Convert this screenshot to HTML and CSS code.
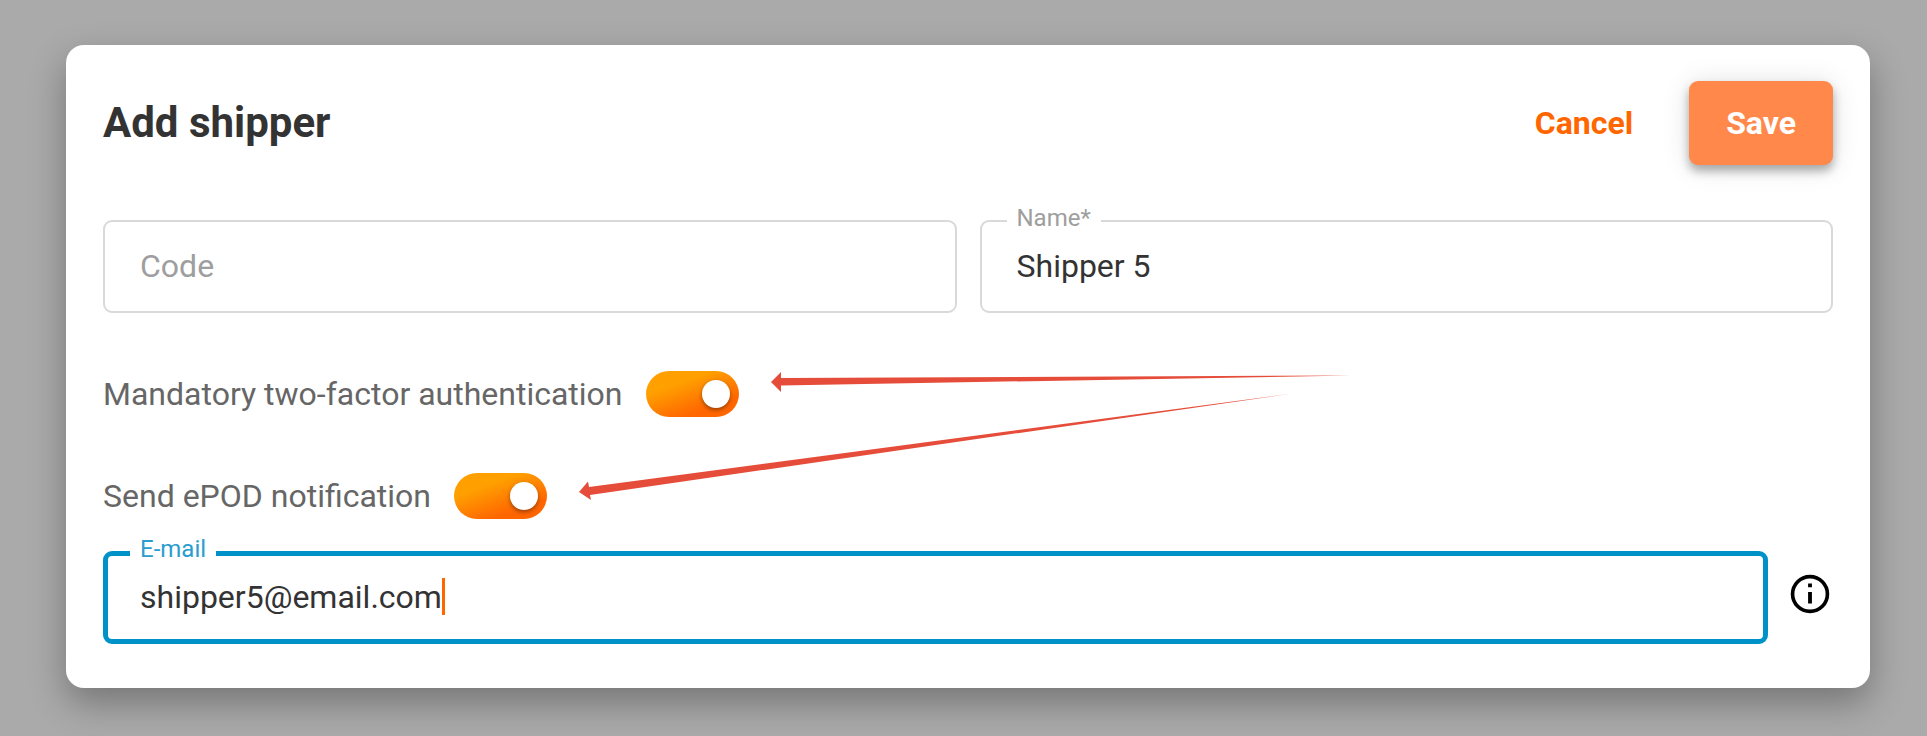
FILE: index.html
```html
<!DOCTYPE html>
<html lang="en">
<head>
<meta charset="utf-8">
<meta name="viewport" content="width=device-width, initial-scale=1">
<title>Add shipper</title>
<link rel="stylesheet" href="styles.css">
</head>
<body>
<main class="backdrop">
  <form class="dialog" role="dialog" aria-labelledby="dialog-title">
    <header class="dialog-header">
      <h1 class="dialog-title" id="dialog-title">Add shipper</h1>
      <div class="dialog-actions">
        <button class="btn btn-text" type="button">Cancel</button>
        <button class="btn btn-primary" type="submit">Save</button>
      </div>
    </header>

    <div class="field-row">
      <div class="field">
        <input class="field-input" id="code" type="text" placeholder="Code" aria-label="Code">
      </div>
      <div class="field">
        <label class="field-label" for="name">Name*</label>
        <input class="field-input" id="name" type="text" value="Shipper 5">
      </div>
    </div>

    <div class="toggle-list">
      <div class="toggle-row">
        <label for="two-factor">Mandatory two-factor authentication</label>
        <input class="toggle" id="two-factor" type="checkbox" role="switch" checked>
      </div>
      <div class="toggle-row">
        <label for="epod">Send ePOD notification</label>
        <input class="toggle" id="epod" type="checkbox" role="switch" checked>
      </div>
    </div>

    <div class="email-row">
      <div class="field field-active">
        <label class="field-label" for="email">E-mail</label>
        <input class="field-input" id="email" type="text" inputmode="email" value="shipper5@email.com">
        <span class="caret"></span>
      </div>
      <button class="info" type="button" aria-label="E-mail information">
        <svg class="info-icon" viewBox="0 0 24 24" aria-hidden="true">
          <circle cx="12" cy="12" r="9.1" fill="none" stroke="#000" stroke-width="1.9"/>
          <path d="M11 6.500h2v2h-2zM11 11h2v6h-2z"/>
        </svg>
      </button>
    </div>

    <svg class="arrows" viewBox="0 0 780 130" aria-hidden="true">
      <path d="M192 12 202 2V8L772 5.500 202 15.500V22Z"/>
      <path d="M0 122 9 111.500 10 117 713 23.500 11 125 12 130Z"/>
    </svg>
  </form>
</main>
</body>
</html>
```
FILE: styles.css
```css
* {
  box-sizing: border-box;
}

body {
  margin: 0;
  background: #aaa;
  font-family: Roboto, "Liberation Sans", sans-serif;
  font-size: 32px;
  line-height: 40px;
  color: #333;
}

.backdrop {
  min-height: 100vh;
  padding: 45px 57px 47px 66px;
}

.dialog {
  position: relative;
  padding: 36px 37px 44px;
  border-radius: 18px;
  background: #fff;
  box-shadow: 0 15px 36px rgba(0, 0, 0, 0.31);
}

.dialog-header {
  display: flex;
  align-items: center;
  justify-content: space-between;
  margin-bottom: 55px;
}

.dialog-title {
  margin: 0;
  font-size: 42px;
  font-weight: 700;
}

.dialog-actions {
  display: flex;
  gap: 19px;
}

.btn {
  height: 84px;
  padding: 0 37px;
  border: 0;
  border-radius: 9px;
  background: none;
  font: inherit;
  font-weight: 700;
  cursor: pointer;
}

.btn-text {
  color: #f60;
}

.btn-primary {
  background: #ff884a;
  color: #fff;
  box-shadow: 0 6px 10px rgba(0, 0, 0, 0.3), 0 2px 28px rgba(0, 0, 0, 0.12);
}

.field-row {
  display: flex;
  gap: 23px;
}

.field {
  position: relative;
  display: flex;
  flex: 1;
  align-items: center;
  min-width: 0;
  height: 93px;
  padding: 0 35px 2px;
  border: 2px solid #d9d9d9;
  border-radius: 9px;
}

.field-input {
  flex: 1;
  min-width: 0;
  padding: 0;
  border: 0;
  outline: 0;
  background: none;
  color: inherit;
  font: inherit;
}

.field-input::placeholder {
  color: #9e9e9e;
  opacity: 1;
}

.field-label {
  position: absolute;
  top: -18px;
  left: 25px;
  padding: 0 10px;
  background: #fff;
  color: #9e9e9e;
  font-size: 24px;
  line-height: 28px;
}

.field-active {
  padding: 0 32px 2px;
  border: 5px solid #0091c8;
}

.field-active .field-label {
  top: -21px;
  left: 22px;
  color: #2a9dce;
}

.field-active .field-input {
  flex: none;
  field-sizing: content;
  caret-color: transparent;
}

.caret {
  width: 3px;
  height: 37px;
  background: #f60;
}

.toggle-list {
  display: flex;
  flex-direction: column;
  gap: 56px;
  margin: 58px 0 32px;
}

.toggle-row {
  display: flex;
  align-items: center;
  gap: 23px;
  height: 46px;
  color: #666;
}

.toggle {
  display: flex;
  align-items: center;
  justify-content: flex-end;
  width: 93px;
  height: 46px;
  margin: 0;
  padding: 0 9px;
  border-radius: 23px;
  appearance: none;
  background: linear-gradient(160deg, #ffa000 30%, #f60 75%);
  cursor: pointer;
}

.toggle::before {
  content: "";
  width: 28px;
  height: 28px;
  border-radius: 50%;
  background: #fff;
  box-shadow: 0 2px 4px rgba(0, 0, 0, 0.4);
}

.toggle:not(:checked) {
  justify-content: flex-start;
  background: #bbb;
}

.email-row {
  display: flex;
  align-items: center;
  gap: 19px;
}

.info {
  display: flex;
  padding: 0 0 7px;
  border: 0;
  background: none;
  cursor: pointer;
}

.info-icon {
  width: 46px;
  height: 46px;
}

.arrows {
  position: absolute;
  top: 325px;
  left: 513px;
  width: 780px;
  height: 130px;
  fill: #e54d3a;
  pointer-events: none;
}
```
